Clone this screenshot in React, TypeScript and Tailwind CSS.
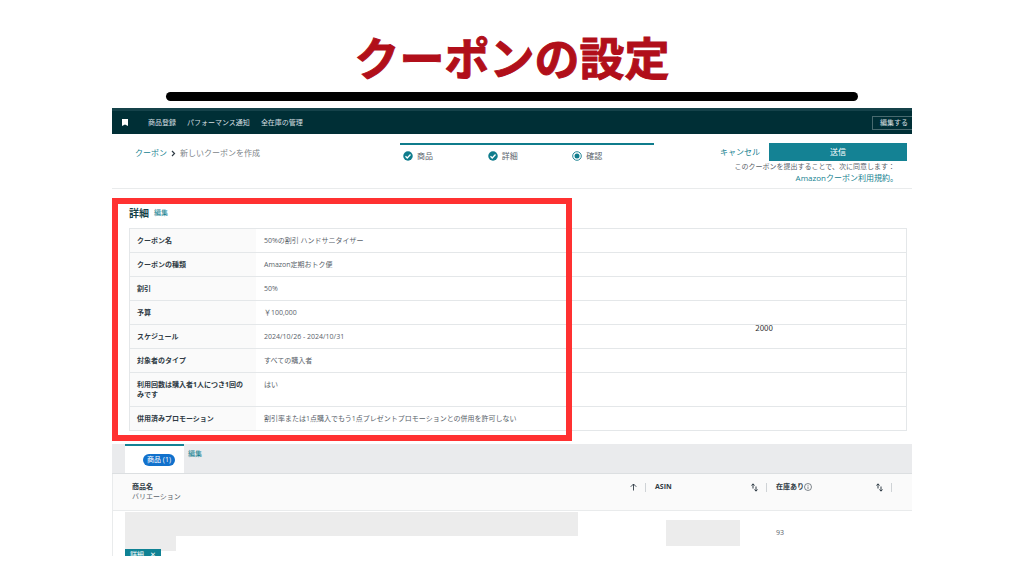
import type { ReactNode } from 'react'

const details = [
  { label: 'クーポン名', value: '50%の割引 ハンドサニタイザー' },
  { label: 'クーポンの種類', value: 'Amazon定期おトク便' },
  { label: '割引', value: '50%' },
  { label: '予算', value: '￥100,000' },
  { label: 'スケジュール', value: '2024/10/26 - 2024/10/31' },
  { label: '対象者のタイプ', value: 'すべての購入者' },
  { label: '利用回数は購入者1人につき1回のみです', value: 'はい' },
  { label: '併用済みプロモーション', value: '割引率または1点購入でもう1点プレゼントプロモーションとの併用を許可しない' },
]

const steps = [
  { label: '商品', done: true },
  { label: '詳細', done: true },
  { label: '確認', done: false },
]

function StepIcon({ done }: { done: boolean }) {
  return (
    <svg viewBox="0 0 20 20" className="size-[10px] shrink-0" aria-hidden="true">
      {done ? (
        <>
          <circle cx="10" cy="10" r="9.5" fill="#0f7c8c" />
          <path d="M5 10.5l3.5 3.5L15 7" fill="none" stroke="#fff" strokeWidth="2.6" />
        </>
      ) : (
        <>
          <circle cx="10" cy="10" r="8.6" fill="#fff" stroke="#0f7c8c" strokeWidth="1.8" />
          <circle cx="10" cy="10" r="5" fill="#0f7c8c" />
        </>
      )}
    </svg>
  )
}

function SortIcon() {
  return (
    <svg viewBox="0 0 14 18" className="h-[9px] w-[7px]" fill="none" stroke="#2f3b45" strokeWidth="2" aria-hidden="true">
      <path d="M4 11V2M1 5l3-3.4L7 5" />
      <path d="M10 7v9M7 13l3 3.4 3-3.4" />
    </svg>
  )
}

function HeadCell({ children, icon }: { children: ReactNode; icon: ReactNode }) {
  return (
    <div className="flex items-center justify-between">
      <span className="flex items-center">{children}</span>
      <button type="button" aria-label="並べ替え" className="flex items-center gap-2">
        {icon}
        <span className="h-[9px] w-px bg-[#cfd3d6]" />
      </button>
    </div>
  )
}

export default function App() {
  return (
    <div className="min-h-screen bg-white px-28 pb-4 font-['Open_Sans','Noto_Sans_CJK_JP',sans-serif] text-[7px] leading-[10px] text-[#59626a]" lang="ja">
      <h1 className="pt-[34px] pb-[13px] text-center font-['Noto_Sans_CJK_JP',sans-serif] text-[45px] leading-[45px] font-bold text-[#b10f1a] [-webkit-text-stroke:1px_#b10f1a]">
        クーポンの設定
      </h1>
      <div className="mx-[54px] mb-[7px] h-[9px] rounded-full bg-black" />

      {/* Top navigation */}
      <header className="flex h-[26px] items-center border-t-[3px] border-[#15424a] bg-[#002f36] pl-[10px] text-[#d5dfe0]">
        <svg viewBox="0 0 12 14" className="h-[7px] w-[6px]" aria-hidden="true">
          <path d="M0 0h12v14l-6-3-6 3z" fill="#fff" />
        </svg>
        <nav className="ml-5 flex gap-[11px]">
          <a href="#register">商品登録</a>
          <a href="#performance">パフォーマンス通知</a>
          <a href="#inventory">全在庫の管理</a>
        </nav>
        <button type="button" className="ml-auto h-[14px] border border-r-0 border-[#496a6f] pr-1 pl-[7px]">
          編集する
        </button>
      </header>

      {/* Breadcrumb, steps and actions */}
      <div className="flex h-[55px] items-start border-b border-[#e9ebec] pr-[5px] pl-[23px] text-[8px]">
        <nav className="mt-[14px] flex w-[265px] shrink-0 items-center gap-1">
          <a href="#coupons" className="text-[#168291]">クーポン</a>
          <svg viewBox="0 0 10 14" className="h-[7px] w-[5px]" fill="none" stroke="#2f3b45" strokeWidth="2.4" aria-hidden="true">
            <path d="M2 2l5 5-5 5" />
          </svg>
          <span className="text-[#7d8489]">新しいクーポンを作成</span>
        </nav>
        <ol className="mt-[9px] grid w-[254px] shrink-0 grid-cols-3 border-t-2 border-[#0f7c8c] pt-[6px]">
          {steps.map((step) => (
            <li key={step.label} className="flex items-center gap-1 pl-[3px]">
              <StepIcon done={step.done} />
              {step.label}
            </li>
          ))}
        </ol>
        <div className="mt-[9px] ml-auto">
          <div className="flex items-center gap-[9px]">
            <button type="button" className="text-[#168291]">キャンセル</button>
            <button type="button" className="h-[18px] w-[138px] bg-[#148294] text-white">送信</button>
          </div>
          <p className="pr-3 text-right text-[7px] leading-[11px]">このクーポンを提出することで、次に同意します：</p>
          <p className="pr-[9px] text-right leading-[11px]">
            <a href="#terms" className="text-[#168291]">Amazonクーポン利用規約。</a>
          </p>
        </div>
      </div>

      {/* Coupon details */}
      <section className="relative mt-[9px] mb-[3px] pt-2 pr-[5px] pb-[10px] pl-[17px]">
        <div className="flex items-center gap-[5px]">
          <h2 className="text-[10px] leading-[14px] font-bold text-[#123f47]">詳細</h2>
          <a href="#edit-details" className="text-[#168291]">編集</a>
        </div>
        <table className="mt-2 w-full border-separate border-spacing-0 border-x border-t border-[#e4e7e9] text-left">
          <tbody>
            {details.map((row) => (
              <tr key={row.label} className="align-top">
                <th scope="row" className="w-[126px] border-b border-[#e4e7e9] bg-[#fafafa] pt-[7px] pr-2 pb-[6px] pl-[7px] font-bold text-[#2f3b45]">
                  {row.label}
                </th>
                <td className="border-b border-[#e4e7e9] pt-[7px] pb-[6px] pl-2">{row.value}</td>
              </tr>
            ))}
          </tbody>
        </table>
        <div className="pointer-events-none absolute inset-y-0 left-0 w-[57.5%] border-[6px] border-[#ff3131]" />
        <span className="absolute top-[125px] left-[80.4%] font-['Noto_Sans_CJK_JP',sans-serif] text-[8px] text-[#333]">2000</span>
      </section>

      {/* Products */}
      <section>
        <div className="flex h-[30px] border-b border-[#dcdfe1] bg-[#eaebed] pl-[13px]">
          <button type="button" className="w-[59px] border-t-2 border-[#148294] bg-white pl-[9px]">
            <span className="inline-block rounded-full bg-[#1171cc] px-1 py-px text-white">商品 (1)</span>
          </button>
          <a href="#edit-products" className="mt-[5px] ml-1 text-[#168291]">編集</a>
        </div>
        <table className="w-full table-fixed border-separate border-spacing-0 border-l border-[#e9ebec] text-left">
          <thead>
            <tr className="h-[37px] bg-[#fafafa] align-top text-[#2f3b45]">
              <th scope="col" className="border-b border-[#e9ebec] pt-2 pl-[19px]">
                <HeadCell
                  icon={
                    <svg viewBox="0 0 14 16" className="h-2 w-[7px]" fill="none" stroke="#2f3b45" strokeWidth="1.8" aria-hidden="true">
                      <path d="M7 15V2M1.5 7.5L7 2l5.5 5.5" />
                    </svg>
                  }
                >
                  商品名
                </HeadCell>
                <span className="block font-normal text-[#59626a]">バリエーション</span>
              </th>
              <th scope="col" className="w-[121px] border-b border-[#e9ebec] pt-2 pl-[9px]">
                <HeadCell icon={<SortIcon />}>ASIN</HeadCell>
              </th>
              <th scope="col" className="w-[125px] border-b border-[#e9ebec] pt-2 pl-[9px]">
                <HeadCell icon={<SortIcon />}>
                  在庫あり
                  <svg viewBox="0 0 16 16" className="size-2" fill="none" stroke="#2f3b45" strokeWidth="1.2" aria-hidden="true">
                    <circle cx="8" cy="8" r="7" />
                    <path d="M8 7v5M8 4v1.6" />
                  </svg>
                </HeadCell>
              </th>
              <th className="w-5 border-b border-[#e9ebec]" />
            </tr>
          </thead>
          <tbody>
            <tr className="align-top">
              <td>
                <div className="h-[45px] overflow-hidden pt-px pr-[68px] pl-3">
                  <div className="flex items-start">
                    <div className="h-[39px] w-[51px] bg-[#ececec]" />
                    <div className="h-6 flex-1 bg-[#ececec]" />
                  </div>
                  <button type="button" className="relative -mt-[2px] flex h-3 w-9 items-center justify-between bg-[#0f8294] px-[5px] text-white">
                    <span>詳細</span>
                    <span>✕</span>
                  </button>
                </div>
              </td>
              <td className="pt-[9px] pl-5">
                <div className="h-[26px] w-[74px] bg-[#ececec]" />
              </td>
              <td className="pt-[17px] pl-[9px]">93</td>
              <td />
            </tr>
          </tbody>
        </table>
      </section>
    </div>
  )
}
